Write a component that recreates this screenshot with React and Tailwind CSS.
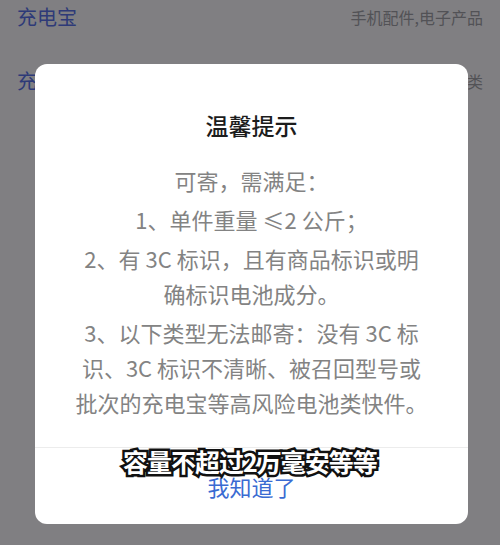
import React from "react";

const lines = [
  ["可寄，需满足："],
  ["1、单件重量 ≤2 公斤；"],
  ["2、有 3C 标识，且有商品标识或明", "确标识电池成分。"],
  ["3、以下类型无法邮寄：没有 3C 标", "识、3C 标识不清晰、被召回型号或", "批次的充电宝等高风险电池类快件。"],
];

export default function App() {
  return (
    <div className="relative h-[545px] w-[500px] overflow-hidden bg-[#807f82] font-['Noto_Sans_CJK_SC','Noto_Sans',sans-serif]">
      <div className="flex h-[33px] items-center justify-between px-[17px]">
        <span className="text-[20px] text-[#2e3a78]">充电宝</span>
        <span className="text-[16px] text-[#525256]">手机配件,电子产品</span>
      </div>
      <div className="mt-[31px] flex h-[33px] items-center justify-between px-[17px]">
        <span className="text-[20px] text-[#2e3a78]">充电宝</span>
        <span className="text-[16px] text-[#525256]">手机配件,电子产品类</span>
      </div>

      <div className="absolute left-[35px] top-[64px] flex h-[460px] w-[433px] flex-col rounded-[12px] bg-white">
        <h2 className="mt-[46px] text-center text-[23px] font-medium leading-[30px] text-[#1c1c1c]">温馨提示</h2>
        <div className="mt-[23px] flex flex-col gap-[4px] text-center text-[22px] leading-[35px] text-[#838383]">
          {lines.map((para, i) => (
            <p key={i}>
              {para.map((l, j) => (
                <span key={j} className="block whitespace-nowrap">{l}</span>
              ))}
            </p>
          ))}
        </div>
        <div className="mt-auto border-t border-[#ececec]">
          <button className="flex h-[76px] w-full items-center justify-center text-[22px] text-[#3a6bd2]">我知道了</button>
        </div>
      </div>

      <div className="absolute left-0 top-[445px] w-full text-center text-[25px] font-bold leading-[32px] tracking-[-1px] text-white [-webkit-text-stroke:5px_#111] [paint-order:stroke_fill]">
        容量不超过2万毫安等等
      </div>
    </div>
  );
}
